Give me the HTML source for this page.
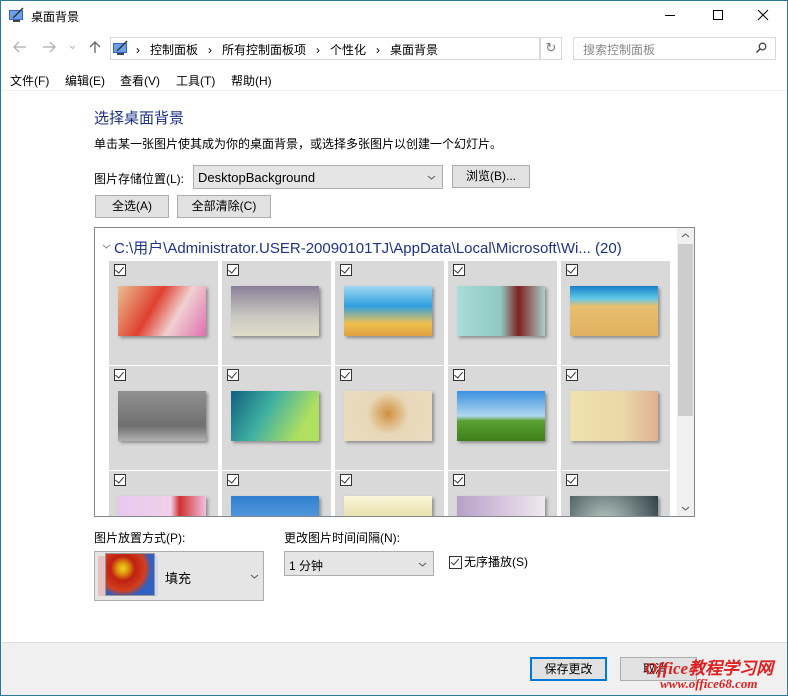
<!DOCTYPE html>
<html><head><meta charset="utf-8"><style>
*{margin:0;padding:0;box-sizing:border-box}
body{width:788px;height:696px;overflow:hidden;background:#fff;font-family:"Liberation Sans","Microsoft YaHei","Noto Sans CJK SC",sans-serif;font-size:12px;color:#000;position:relative}
.a{position:absolute;white-space:nowrap}
.btn{position:absolute;background:#e1e1e1;border:1px solid #adadad;text-align:center;font-size:12px}
.cell{position:absolute;width:109px;height:104px;background:#d9d9d9}
.cb{position:absolute;left:5px;top:3px;width:12px;height:12px;border:1px solid #333;background:#fff}
.cb:after{content:"";position:absolute;left:2px;top:0px;width:4px;height:7px;border-right:1.3px solid #333;border-bottom:1.3px solid #333;transform:rotate(40deg)}
.th{position:absolute;left:9px;top:25px;width:88px;height:50px;box-shadow:2px 2px 3px rgba(0,0,0,.35)}
.chev{position:absolute}
</style></head><body>
<div class="a" style="left:0;top:0;width:788px;height:696px;border:1px solid #2b79a0"></div>
<svg class="a" style="left:9px;top:7px" width="16" height="16"><rect x="0" y="3" width="14" height="10" fill="#3a63c9"/><rect x="1" y="4" width="12" height="8" fill="#6aa0ea"/><path d="M4 11 L14 1" stroke="#333" stroke-width="1.5"/><rect x="4" y="13" width="7" height="2" fill="#444"/></svg>
<div class="a" style="left:31px;top:8px;font-size:12px">桌面背景</div>
<div class="a" style="left:665px;top:15px;width:10px;height:1px;background:#000"></div>
<div class="a" style="left:713px;top:10px;width:10px;height:10px;border:1px solid #000"></div>
<svg class="a" style="left:757px;top:9px" width="12" height="12"><path d="M1 1L11 11M11 1L1 11" stroke="#000" stroke-width="1"/></svg>
<svg class="a" style="left:13px;top:41px" width="14" height="12"><path d="M13 6H2M6 1L1 6L6 11" stroke="#aaa" fill="none" stroke-width="1.2"/></svg>
<svg class="a" style="left:42px;top:41px" width="14" height="12"><path d="M1 6H12M8 1L13 6L8 11" stroke="#aaa" fill="none" stroke-width="1.2"/></svg>
<svg class="a" style="left:69px;top:45px" width="7" height="5"><path d="M1 1L3.5 3.5L6 1" stroke="#bbb" fill="none"/></svg>
<svg class="a" style="left:89px;top:40px" width="12" height="14"><path d="M6 13V2M1 7L6 2L11 7" stroke="#666" fill="none" stroke-width="1.3"/></svg>
<div class="a" style="left:110px;top:37px;width:430px;height:23px;border:1px solid #d9d9d9"></div>
<div class="a" style="left:540px;top:37px;width:22px;height:23px;border:1px solid #d9d9d9;color:#777;text-align:center;line-height:20px;font-size:13px">↻</div>
<svg class="a" style="left:113px;top:40px" width="16" height="16"><rect x="0" y="3" width="14" height="10" fill="#3a63c9"/><rect x="1" y="4" width="12" height="8" fill="#6aa0ea"/><path d="M4 11 L14 1" stroke="#333" stroke-width="1.5"/><rect x="4" y="13" width="7" height="2" fill="#444"/></svg>
<div class="a" style="left:136px;top:41px;color:#000">›&nbsp;&nbsp; 控制面板 &nbsp;&nbsp;›&nbsp;&nbsp; 所有控制面板项 &nbsp;&nbsp;›&nbsp;&nbsp; 个性化 &nbsp;&nbsp;›&nbsp;&nbsp; 桌面背景</div>
<div class="a" style="left:573px;top:37px;width:203px;height:23px;border:1px solid #d9d9d9"></div>
<div class="a" style="left:583px;top:41px;color:#888">搜索控制面板</div>
<svg class="a" style="left:755px;top:42px" width="12" height="12"><circle cx="7.5" cy="4.5" r="3.3" stroke="#444" fill="none" stroke-width="1.3"/><path d="M5 7L1.5 10.5" stroke="#444" stroke-width="1.5"/></svg>
<div class="a" style="left:10px;top:72px">文件(F)</div>
<div class="a" style="left:65px;top:72px">编辑(E)</div>
<div class="a" style="left:120px;top:72px">查看(V)</div>
<div class="a" style="left:176px;top:72px">工具(T)</div>
<div class="a" style="left:231px;top:72px">帮助(H)</div>
<div class="a" style="left:1px;top:90px;width:786px;height:1px;background:#f0f0f0"></div>
<div class="a" style="left:94px;top:107px;font-size:15px;color:#1e3287">选择桌面背景</div>
<div class="a" style="left:94px;top:135px">单击某一张图片使其成为你的桌面背景，或选择多张图片以创建一个幻灯片。</div>
<div class="a" style="left:94px;top:170px">图片存储位置(L):</div>
<div class="a" style="left:193px;top:165px;width:250px;height:24px;background:#e5e5e5;border:1px solid #adadad;padding:4px 4px;font-size:13px">DesktopBackground<svg class="chev" style="right:6px;top:9px" width="9" height="5"><path d="M1 1L4.5 4L8 1" stroke="#555" fill="none"/></svg></div>
<div class="btn" style="left:452px;top:165px;width:78px;height:23px;line-height:21px">浏览(B)...</div>
<div class="btn" style="left:95px;top:195px;width:74px;height:23px;line-height:21px">全选(A)</div>
<div class="btn" style="left:177px;top:195px;width:94px;height:23px;line-height:21px">全部清除(C)</div>
<div class="a" style="left:94px;top:227px;width:601px;height:290px;border:1px solid #828790;overflow:hidden">
 <svg class="a" style="left:7px;top:16px" width="9" height="5"><path d="M1 1L4.5 4L8 1" stroke="#888" fill="none"/></svg>
 <div class="a" style="left:19px;top:9px;color:#1e3287;font-size:15px">C:\用户\Administrator.USER-20090101TJ\AppData\Local\Microsoft\Wi... (20)</div>
 <div class="a" style="left:582px;top:0;width:17px;height:288px;background:#f0f0f0"></div>
 <div class="a" style="left:583px;top:16px;width:15px;height:172px;background:#cdcdcd"></div>
 <svg class="a" style="left:586px;top:5px" width="9" height="5"><path d="M1 4L4.5 1L8 4" stroke="#555" fill="none"/></svg>
 <svg class="a" style="left:586px;top:278px" width="9" height="5"><path d="M1 1L4.5 4L8 1" stroke="#555" fill="none"/></svg>
 <div style="position:absolute;left:-95px;top:-228px">
  <div class="cell" style="left:109px;top:261px"><div class="cb"></div><div class="th" style="background:linear-gradient(120deg,#e8c090 0%,#e04030 40%,#f0d0d0 65%,#e070b0 100%)"></div></div>
  <div class="cell" style="left:222px;top:261px"><div class="cb"></div><div class="th" style="background:linear-gradient(180deg,#8a8098,#c8c8c0 60%,#e0dcc8)"></div></div>
  <div class="cell" style="left:335px;top:261px"><div class="cb"></div><div class="th" style="background:linear-gradient(180deg,#a0d8f0 0%,#30a0e0 40%,#f0c050 75%,#e0a040)"></div></div>
  <div class="cell" style="left:448px;top:261px"><div class="cb"></div><div class="th" style="background:linear-gradient(90deg,#a8dcd8 0%,#90c8c0 50%,#802020 70%,#a8d0c8)"></div></div>
  <div class="cell" style="left:561px;top:261px"><div class="cb"></div><div class="th" style="background:linear-gradient(180deg,#1880c8 0%,#60c8e8 25%,#e8c070 40%,#e0b060)"></div></div>
  <div class="cell" style="left:109px;top:366px"><div class="cb"></div><div class="th" style="background:linear-gradient(180deg,#909090,#707070 70%,#b0b0b0)"></div></div>
  <div class="cell" style="left:222px;top:366px"><div class="cb"></div><div class="th" style="background:linear-gradient(120deg,#106080 0%,#40b0a0 40%,#b0e060 80%)"></div></div>
  <div class="cell" style="left:335px;top:366px"><div class="cb"></div><div class="th" style="background:radial-gradient(circle at 50% 45%,#d09040 0,#e8d8b8 40%,#eadcc0)"></div></div>
  <div class="cell" style="left:448px;top:366px"><div class="cb"></div><div class="th" style="background:linear-gradient(180deg,#3c90e0 0%,#b0d8f0 50%,#58a030 60%,#40801c)"></div></div>
  <div class="cell" style="left:561px;top:366px"><div class="cb"></div><div class="th" style="background:linear-gradient(90deg,#f0e0b0,#ecd8a8 60%,#e0b090)"></div></div>
  <div class="cell" style="left:109px;top:471px"><div class="cb"></div><div class="th" style="background:linear-gradient(90deg,#e8c8f0,#f0d0e8 60%,#d03030 70%,#f0c0e0)"></div></div>
  <div class="cell" style="left:222px;top:471px"><div class="cb"></div><div class="th" style="background:linear-gradient(180deg,#3080d0,#80b8e8)"></div></div>
  <div class="cell" style="left:335px;top:471px"><div class="cb"></div><div class="th" style="background:linear-gradient(180deg,#f8f4d8,#d8c870)"></div></div>
  <div class="cell" style="left:448px;top:471px"><div class="cb"></div><div class="th" style="background:linear-gradient(90deg,#b8a0c8,#f0e8f0)"></div></div>
  <div class="cell" style="left:561px;top:471px"><div class="cb"></div><div class="th" style="background:radial-gradient(circle at 40% 60%,#c0d0c8,#304048)"></div></div>
 </div>
</div>
<div class="a" style="left:94px;top:529px">图片放置方式(P):</div>
<div class="a" style="left:94px;top:551px;width:170px;height:50px;background:#e5e5e5;border:1px solid #adadad"></div>
<div class="a" style="left:98px;top:556px;width:60px;height:40px;background:linear-gradient(90deg,#e8c0c0,#d0d8f0)"></div>
<div class="a" style="left:105px;top:553px;width:50px;height:43px;background:radial-gradient(circle at 35% 35%,#f0d020 0,#e0a010 12%,#c02010 30%,#d04020 55%,#3060c0 70%);border:1px solid #999"></div>
<div class="a" style="left:165px;top:568px;font-size:13px">填充</div>
<svg class="a" style="left:250px;top:574px" width="9" height="5"><path d="M1 1L4.5 4L8 1" stroke="#555" fill="none"/></svg>
<div class="a" style="left:284px;top:529px">更改图片时间间隔(N):</div>
<div class="a" style="left:284px;top:551px;width:150px;height:25px;background:#e5e5e5;border:1px solid #adadad;padding:5px 4px">1 分钟<svg class="chev" style="right:6px;top:10px" width="9" height="5"><path d="M1 1L4.5 4L8 1" stroke="#555" fill="none"/></svg></div>
<div class="a" style="left:449px;top:556px;width:13px;height:13px;border:1px solid #333"><div style="position:absolute;left:3px;top:0;width:4px;height:8px;border-right:1.3px solid #333;border-bottom:1.3px solid #333;transform:rotate(40deg)"></div></div>
<div class="a" style="left:464px;top:553px">无序播放(S)</div>
<div class="a" style="left:1px;top:642px;width:786px;height:53px;background:#f0f0f0;border-top:1px solid #dfdfdf"></div>
<div class="btn" style="left:530px;top:657px;width:77px;height:24px;line-height:20px;border:2px solid #0078d7">保存更改</div>
<div class="btn" style="left:620px;top:657px;width:77px;height:24px;line-height:22px;text-align:left;padding-left:22px">取消</div>
<div class="a" style="left:645px;top:654px;font-family:'Liberation Serif',serif;font-style:italic;font-weight:bold;color:#e02020;font-size:17px">Office教程学习网</div>
<div class="a" style="left:660px;top:676px;font-family:'Liberation Serif',serif;font-style:italic;font-weight:bold;color:#e02020;font-size:13px">www.office68.com</div>
</body></html>
